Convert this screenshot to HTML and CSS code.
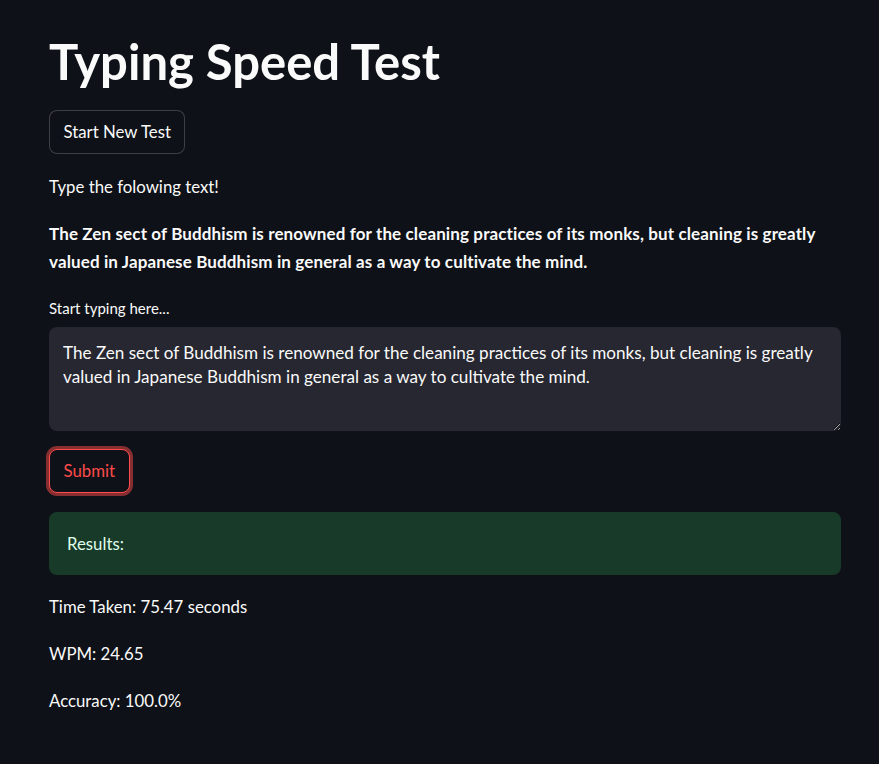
FILE: index.html
```html
<!DOCTYPE html>
<html lang="en">
<head>
<meta charset="utf-8">
<title>Typing Speed Test</title>
<link rel="stylesheet" href="styles.css">
</head>
<body>
<main class="container">
  <h1 class="title">Typing Speed Test</h1>
  <div class="row row-start"><button class="btn">Start New Test</button></div>
  <p class="para intro">Type the folowing text!</p>
  <p class="para strong">The Zen sect of Buddhism is renowned for the cleaning practices of its monks, but cleaning is greatly valued in Japanese Buddhism in general as a way to cultivate the mind.</p>
  <label class="label" for="ta">Start typing here...</label>
  <textarea id="ta" class="area">The Zen sect of Buddhism is renowned for the cleaning practices of its monks, but cleaning is greatly valued in Japanese Buddhism in general as a way to cultivate the mind.</textarea>
  <div class="row row-submit"><button class="btn btn-focus">Submit</button></div>
  <div class="alert">Results:</div>
  <p class="para stat">Time Taken: 75.47 seconds</p>
  <p class="para stat">WPM: 24.65</p>
  <p class="para stat">Accuracy: 100.0%</p>
</main>
</body>
</html>
```

FILE: styles.css
```css
html, body {
  margin: 0;
  padding: 0;
  background: #0e1117;
}
body {
  color: #fafafa;
  font-family: "Source Sans Pro", Lato, sans-serif;
  font-size: 16.8px;
  line-height: 26px;
}
.container {
  width: 792px;
  margin-left: 49px;
  padding-top: 31px;
  display: flex;
  flex-direction: column;
}
.title {
  margin: 0 0 19px;
  font-size: 49px;
  font-weight: 700;
  line-height: 60px;
}
.row {
  display: flex;
}
.row-start {
  margin-bottom: 20px;
}
.row-submit {
  margin-bottom: 19px;
}
.btn {
  font-family: inherit;
  font-size: 16.8px;
  color: #fafafa;
  background: #0e1117;
  border: 1px solid rgba(250, 250, 250, 0.2);
  border-radius: 8px;
  height: 44px;
  padding: 0 13.5px;
  line-height: 1;
}
.btn-focus {
  color: #ff4b4b;
  border-color: #ff4b4b;
  box-shadow: 0 0 0 3px rgba(255, 75, 75, 0.5);
}
.para {
  margin: 0;
}
.intro {
  margin-bottom: 20px;
}
.strong {
  font-weight: 700;
  font-size: 17px;
  letter-spacing: 0.12px;
  line-height: 28px;
  margin-bottom: 22px;
}
.label {
  font-size: 15px;
  line-height: 20px;
  margin-bottom: 9px;
}
.area {
  font-family: inherit;
  font-size: 17.1px;
  line-height: 24px;
  color: #fafafa;
  background: #262730;
  border: none;
  border-radius: 8px;
  height: 104px;
  padding: 14px 14px;
  box-sizing: border-box;
  margin: 0 0 18px;
  outline: none;
  resize: vertical;
}
.alert {
  display: flex;
  align-items: center;
  background: #183a29;
  color: #dffde9;
  border-radius: 8px;
  padding: 0 18px;
  height: 63px;
  box-sizing: border-box;
  margin-bottom: 19px;
}
.stat {
  margin-bottom: 21px;
}
```
